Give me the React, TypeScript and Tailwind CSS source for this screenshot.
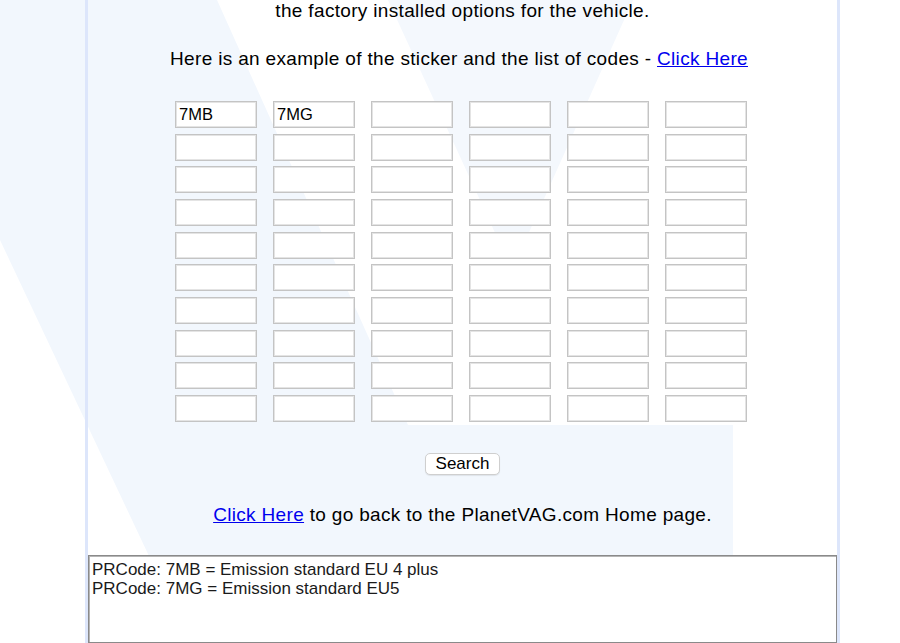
import React from "react";

const rows = 10;
const cols = 6;
const initial: Record<string, string> = { "0-0": "7MB", "0-1": "7MG" };

export default function App() {
  return (
    <div className="relative w-[900px] h-[643px] overflow-hidden bg-white font-['Liberation_Sans',Arial,sans-serif] text-black">
      <svg className="absolute inset-0 pointer-events-none" width="900" height="643" viewBox="0 0 900 643">
        <path
          d="M0 0 L217 0 L408 425 L733 425 L733 643 L190 643 L0 240 Z"
          fill="#f2f7fd"
        />
        <path d="M388 0 L633 0 L522 248 Q512 268 502 248 Z" fill="#f4f8fd" />
      </svg>

      <div className="relative ml-[85px] w-[755px] h-[643px] border-x-[3px] border-[#dde6fb] flex flex-col items-center">
        <p className="text-[19px] leading-[22px] tracking-[0.33px] text-center">
          the factory installed options for the vehicle.
        </p>
        <p className="mt-[25.7px] mr-[7px] text-[19px] leading-[22px] tracking-[0.33px] text-center">
          Here is an example of the sticker and the list of codes -{" "}
          <a href="#" className="text-[#0000ee] underline">
            Click Here
          </a>
        </p>

        <div className="mt-[31.3px] self-start ml-[87px] grid grid-cols-[repeat(6,82px)] gap-x-4 gap-y-[5.67px]">
          {Array.from({ length: rows }).map((_, r) =>
            Array.from({ length: cols }).map((_, c) => (
              <input
                key={`${r}-${c}`}
                type="text"
                defaultValue={initial[`${r}-${c}`] ?? ""}
                className="w-[82px] h-[27px] border border-[#c4c4c4] shadow-[inset_0_0_0_1px_#e4e4e4] bg-white px-[3px] pt-[1px] text-[16.5px] leading-[20px] outline-none font-['Liberation_Sans',Arial,sans-serif]"
              />
            ))
          )}
        </div>

        <button
          type="button"
          className="mt-[31px] w-[75px] h-[24px] rounded-[5px] border border-[#cfcfcf] bg-white text-[17px] leading-[20px] shadow-[0_1px_1px_rgba(0,0,0,0.08)] font-['Liberation_Sans',Arial,sans-serif]"
        >
          Search
        </button>

        <p className="mt-[28.7px] text-[19px] leading-[22px] tracking-[0.33px] text-center">
          <a href="#" className="text-[#0000ee] underline">
            Click Here
          </a>{" "}
          to go back to the PlanetVAG.com Home page.
        </p>

        <textarea
          readOnly
          defaultValue={"PRCode: 7MB = Emission standard EU 4 plus\nPRCode: 7MG = Emission standard EU5"}
          className="mt-[29.5px] self-stretch h-[140px] resize-none border border-[#8a8a8a] shadow-[inset_1px_1px_0_#b5b5b5] bg-white px-[3px] pt-[4px] text-[17px] leading-[19px] text-[#1a1a1a] outline-none font-['Liberation_Sans',Arial,sans-serif]"
        />
      </div>
    </div>
  );
}
